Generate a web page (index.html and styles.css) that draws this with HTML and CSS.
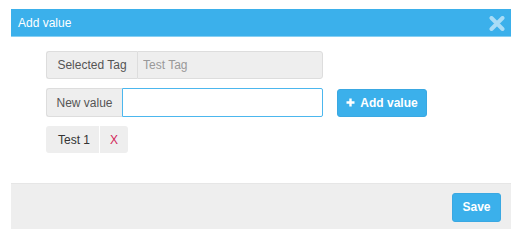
FILE: index.html
```html
<!DOCTYPE html>
<html lang="en">
<head>
<meta charset="UTF-8">
<meta name="viewport" content="width=device-width, initial-scale=1.0">
<title>Add value</title>
<link rel="stylesheet" href="styles.css">
</head>
<body>
<div class="modal">
  <div class="modal-header">
    <span class="modal-title">Add value</span>
    <svg class="close" width="16" height="15" viewBox="0 0 16 15">
      <path d="M2.5 2 L13.5 13 M13.5 2 L2.5 13" stroke="#a9dcf6" stroke-width="4" stroke-linecap="round"/>
    </svg>
  </div>
  <div class="modal-body">
    <div class="input-group">
      <span class="addon addon-wide">Selected Tag</span>
      <input type="text" class="field field-readonly" value="Test Tag" readonly>
    </div>
    <div class="row">
      <div class="input-group">
        <span class="addon">New value</span>
        <input type="text" class="field field-focus">
      </div>
      <button class="btn btn-add">
        <svg class="plus" width="9" height="9" viewBox="0 0 9 9">
          <path d="M4.5 0.5 V8.5 M0.5 4.5 H8.5" stroke="#fff" stroke-width="2.4"/>
        </svg>
        Add value
      </button>
    </div>
    <div class="tag">
      <span class="tag-name">Test 1</span>
      <span class="tag-remove">X</span>
    </div>
  </div>
  <div class="modal-footer">
    <button class="btn btn-save">Save</button>
  </div>
</div>
</body>
</html>
```

FILE: styles.css
```css
body {
  margin: 0;
  padding: 9px 10px 0 11px;
  background: #fff;
  font-family: "Liberation Sans", Arial, sans-serif;
  font-size: 12px;
}
.modal {
  width: 500px;
}
.modal-header {
  height: 27px;
  background: #3bb0eb;
  border-bottom: 1px solid #86cff3;
  display: flex;
  align-items: center;
  justify-content: space-between;
  padding: 0 6px 0 7px;
  color: #fff;
}
.modal-title {
  font-size: 12px;
}
.close {
  display: block;
  margin-top: 1px;
}
.modal-body {
  padding: 14px 0 30px 35px;
  display: flex;
  flex-direction: column;
  gap: 9px;
}
.row {
  display: flex;
  align-items: center;
  gap: 14px;
}
.input-group {
  display: flex;
  width: 277px;
  height: 28px;
}
.row .input-group {
  height: 29px;
}
.addon {
  box-sizing: border-box;
  width: 76px;
  background: #eee;
  border: 1px solid #ddd;
  border-right: none;
  border-radius: 3px 0 0 3px;
  color: #555;
  display: flex;
  align-items: center;
  justify-content: center;
}
.addon-wide {
  width: 91px;
}
.field {
  flex: 1;
  box-sizing: border-box;
  margin: 0;
  font-family: inherit;
  font-size: 12px;
  padding: 0 5px;
  outline: none;
}
.field-readonly {
  background: #eee;
  border: 1px solid #ddd;
  border-radius: 0 3px 3px 0;
  color: #999;
}
.field-focus {
  background: #fff;
  border: 1px solid #4cb7ee;
  border-radius: 0 2px 2px 0;
}
.btn {
  background: #3bb0eb;
  color: #fff;
  border: 1px solid #3aa8e2;
  border-radius: 3px;
  font-family: inherit;
  font-size: 12px;
  font-weight: bold;
  cursor: pointer;
}
.btn-add {
  width: 90px;
  height: 28px;
  padding: 0;
  display: flex;
  align-items: center;
  justify-content: center;
  gap: 5px;
}
.plus {
  display: block;
}
.tag {
  display: flex;
  height: 27px;
  gap: 1px;
}
.tag-name,
.tag-remove {
  background: #eee;
  display: flex;
  align-items: center;
}
.tag-name {
  width: 53px;
  padding-left: 12px;
  box-sizing: border-box;
  color: #333;
  border-radius: 3px 0 0 3px;
}
.tag-remove {
  width: 28px;
  justify-content: center;
  color: #d3275a;
  border-radius: 0 3px 3px 0;
}
.modal-footer {
  height: 46px;
  background: #eee;
  border-top: 1px solid #e6e6e6;
  box-sizing: border-box;
  display: flex;
  align-items: center;
  justify-content: flex-end;
  padding: 0 10px;
}
.btn-save {
  width: 49px;
  height: 29px;
  padding: 0;
  margin-top: 1px;
}
```
